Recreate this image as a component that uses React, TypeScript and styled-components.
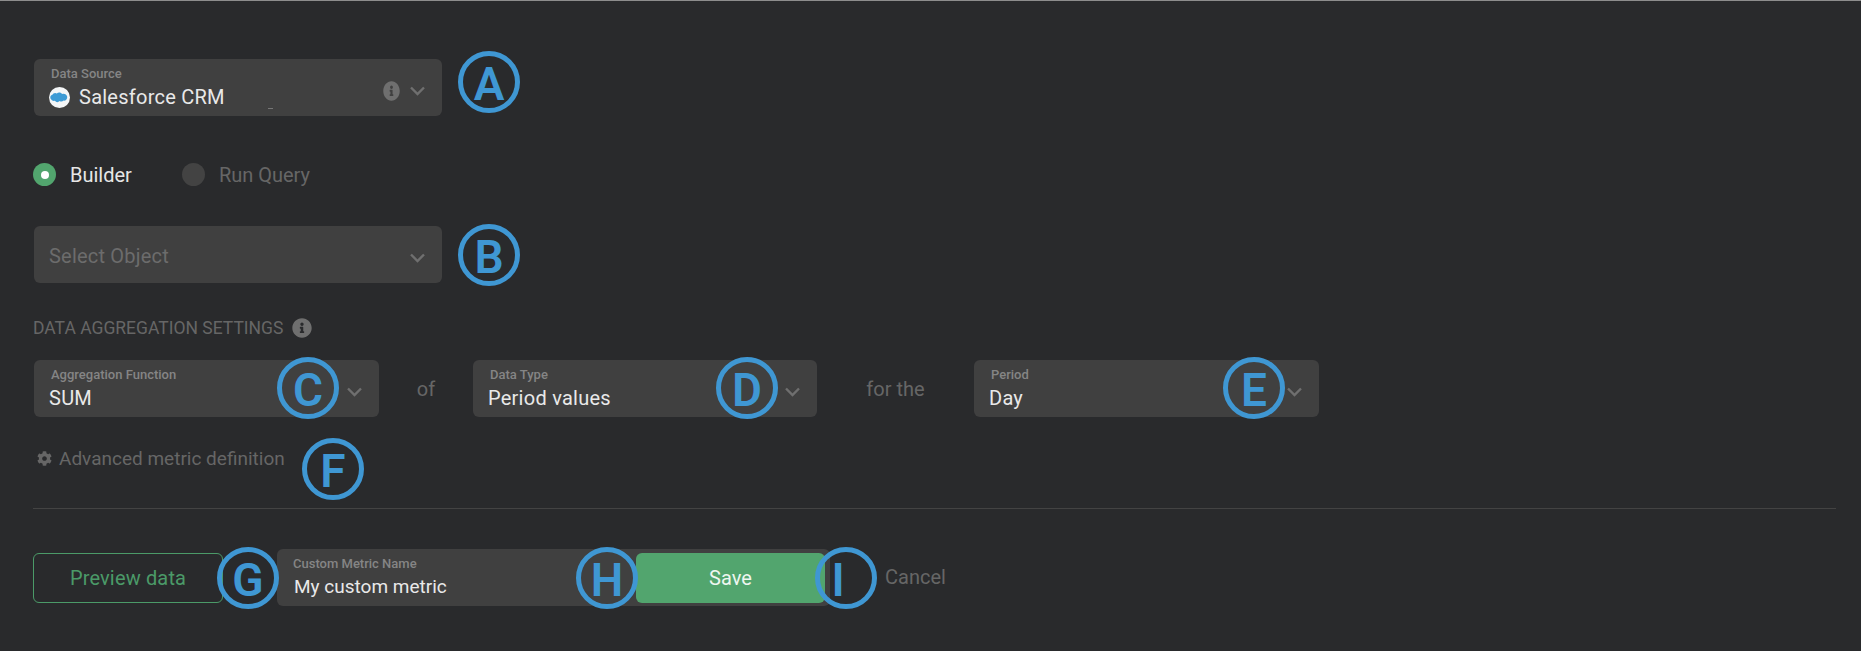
import React from 'react';
import styled, { createGlobalStyle } from 'styled-components';
import { FaInfoCircle, FaCog } from 'react-icons/fa';

const Global = createGlobalStyle`
  html, body { margin: 0; padding: 0; background: #fff; }
  body { font-family: Roboto, "Liberation Sans", sans-serif; }
`;

const Panel = styled.div`
  position: relative;
  box-sizing: border-box;
  width: 1861px;
  height: 651px;
  padding: 58px 25px 0 33px;
  background: #292a2c;
  border-top: 1px solid #8d8d8d;
  overflow: hidden;
`;

const Field = styled.div<{ $w: number }>`
  position: relative;
  box-sizing: border-box;
  width: ${(p) => p.$w}px;
  height: 57px;
  flex: none;
  background: #404040;
  border-radius: 6px;
  padding: 8px 16px 0 16px;
`;

const FieldLabel = styled.div`
  font-size: 13px;
  line-height: 14px;
  font-weight: 500;
  color: #858585;
  padding-left: 1px;
`;

const FieldValue = styled.div`
  display: flex;
  align-items: center;
  gap: 9px;
  margin-top: 4px;
  margin-left: -1px;
  font-size: 20px;
  line-height: 24px;
  letter-spacing: 0.25px;
  color: #e9e9e9;
`;

const Placeholder = styled.div`
  font-size: 20px;
  line-height: 45px;
  letter-spacing: 0.2px;
  color: #6c6c6c;
  margin-left: -1px;
`;

const FieldIcons = styled.div`
  position: absolute;
  right: 17px;
  top: 22px;
  height: 20px;
  display: flex;
  align-items: center;
  gap: 10px;
  color: #6f6f6f;
`;

const Tick = styled.span`
  position: absolute;
  left: 234px;
  bottom: 7px;
  width: 5px;
  height: 1px;
  background: #767676;
`;

const TopField = styled(Field)`
  margin-left: 1px;
`;

const RadioRow = styled.div`
  display: flex;
  align-items: center;
  height: 23px;
  margin-top: 47px;
`;

const RadioOption = styled.div<{ $on?: boolean }>`
  display: flex;
  align-items: center;
  gap: 14px;
  margin-right: 50px;
  font-size: 20px;
  color: ${(p) => (p.$on ? '#e6e6e6' : '#666666')};
`;

const RadioDot = styled.span<{ $on?: boolean }>`
  display: flex;
  align-items: center;
  justify-content: center;
  width: 23px;
  height: 23px;
  border-radius: 50%;
  background: ${(p) => (p.$on ? '#52a56e' : '#434343')};
  &::after {
    content: '';
    display: ${(p) => (p.$on ? 'block' : 'none')};
    width: 8px;
    height: 8px;
    border-radius: 50%;
    background: #fff;
  }
`;

const SelectObject = styled(Field)`
  margin-top: 40px;
  margin-left: 1px;
`;

const SectionHeading = styled.div`
  display: flex;
  align-items: center;
  gap: 9px;
  height: 20px;
  margin-top: 35px;
  font-size: 17.5px;
  color: #666666;
  text-transform: uppercase;
`;

const AggRow = styled.div`
  display: flex;
  align-items: center;
  margin-top: 22px;
  margin-left: 1px;
`;

const Joiner = styled.div<{ $w: number }>`
  width: ${(p) => p.$w}px;
  flex: none;
  text-align: center;
  font-size: 20px;
  color: #666666;
`;

const AdvancedRow = styled.div`
  display: flex;
  align-items: center;
  gap: 7px;
  height: 24px;
  margin-top: 29px;
  margin-left: 4px;
  font-size: 19px;
  color: #666666;
`;

const Divider = styled.hr`
  margin: 38px 0 0;
  border: 0;
  height: 1px;
  background: #434343;
`;

const Actions = styled.div`
  display: flex;
  align-items: center;
  margin-top: 40px;
`;

const PreviewButton = styled.button`
  box-sizing: border-box;
  width: 190px;
  height: 50px;
  flex: none;
  background: transparent;
  border: 1px solid #4b9a68;
  border-radius: 6px;
  font: inherit;
  font-size: 20px;
  letter-spacing: 0.15px;
  color: #4b9a68;
`;

const NameField = styled(Field)`
  display: flex;
  align-items: center;
  margin-left: 54px;
  padding: 0 5px 0 15px;
`;

const NameText = styled.div`
  flex: 1;
`;

const NameValue = styled(FieldValue)`
  margin-left: 2px;
  font-size: 19px;
  letter-spacing: 0;
`;

const SaveButton = styled.button`
  width: 189px;
  height: 50px;
  flex: none;
  background: #52a56e;
  border: 0;
  border-radius: 6px;
  font: inherit;
  font-size: 20px;
  color: #eef6f0;
`;

const CancelLink = styled.div`
  margin-left: 55px;
  margin-top: -1px;
  font-size: 20px;
  color: #666666;
`;

const Marker = styled.div<{ $x: number; $y: number; $shift: number }>`
  position: absolute;
  left: ${(p) => p.$x - 31}px;
  top: ${(p) => p.$y - 32}px;
  box-sizing: border-box;
  width: 62px;
  height: 62px;
  display: flex;
  align-items: center;
  justify-content: center;
  padding: 4px ${(p) => p.$shift}px 0 0;
  border: 5px solid #3f97d3;
  border-radius: 50%;
  font-family: Roboto, "Liberation Sans", sans-serif;
  font-size: 46px;
  font-weight: 600;
  line-height: 1;
  color: #3f97d3;
`;

const Chevron = () => (
  <svg width="15" height="10" viewBox="0 0 15 10" fill="none">
    <path d="M1 1.5 L7.5 8 L14 1.5" stroke="#6f6f6f" strokeWidth="2.4" />
  </svg>
);

const SalesforceLogo = () => (
  <svg width="21" height="21" viewBox="0 0 20 20" style={{ flex: 'none' }}>
    <circle cx="10" cy="10" r="10" fill="#f4f6f7" />
    <path
      transform="translate(-0.8 -1) scale(1.08 1.1)"
      d="M2.6 11.6c-1.3-1.3-.7-3.6 1.2-3.9.6-1.5 2.5-2.1 3.8-1.1 1.3-1.5 3.8-1.2 4.8.4 1.9-.6 4 .5 4.4 2.3.3 2-1.3 3.6-3.2 3.4-.9 1-2.5 1.1-3.5.4-1.1 1.3-3.2 1.2-4.1-.2-1.3.3-2.7 0-3.4-1.3z"
      fill="#3d9bd5"
    />
  </svg>
);

const InfoGlyph = styled(FaInfoCircle)`
  width: 17px;
  height: 20px;
  color: #6f6f6f;
`;

const HeadingInfo = styled(FaInfoCircle)`
  width: 20px;
  height: 20px;
  color: #6f6f6f;
`;

const Gear = styled(FaCog)`
  width: 15px;
  height: 15px;
  color: #666666;
`;

const Select = ({ w, label, value }: { w: number; label: string; value: string }) => (
  <Field $w={w}>
    <FieldLabel>{label}</FieldLabel>
    <FieldValue>{value}</FieldValue>
    <FieldIcons>
      <Chevron />
    </FieldIcons>
  </Field>
);

const markers: [string, number, number, number][] = [
  ['A', 489, 82, 0],
  ['B', 489, 255, 0],
  ['C', 308, 388, 0],
  ['D', 747, 388, 0],
  ['E', 1254, 388, 0],
  ['F', 333, 469, 0],
  ['G', 248, 578, 0],
  ['H', 607, 578, 0],
  ['I', 846, 578, 16],
];

export default function App() {
  return (
    <>
      <Global />
      <Panel>
        <TopField $w={408}>
          <FieldLabel>Data Source</FieldLabel>
          <FieldValue>
            <SalesforceLogo />
            Salesforce CRM
          </FieldValue>
          <FieldIcons>
            <InfoGlyph preserveAspectRatio="none" />
            <Chevron />
          </FieldIcons>
          <Tick />
        </TopField>

        <RadioRow>
          <RadioOption $on>
            <RadioDot $on />
            Builder
          </RadioOption>
          <RadioOption>
            <RadioDot />
            Run Query
          </RadioOption>
        </RadioRow>

        <SelectObject $w={408}>
          <Placeholder>Select Object</Placeholder>
          <FieldIcons>
            <Chevron />
          </FieldIcons>
        </SelectObject>

        <SectionHeading>
          Data Aggregation Settings
          <HeadingInfo />
        </SectionHeading>

        <AggRow>
          <Select w={345} label="Aggregation Function" value="SUM" />
          <Joiner $w={94}>of</Joiner>
          <Select w={344} label="Data Type" value="Period values" />
          <Joiner $w={157}>for the</Joiner>
          <Select w={345} label="Period" value="Day" />
        </AggRow>

        <AdvancedRow>
          <Gear />
          Advanced metric definition
        </AdvancedRow>

        <Divider />

        <Actions>
          <PreviewButton>Preview data</PreviewButton>
          <NameField $w={553}>
            <NameText>
              <FieldLabel>Custom Metric Name</FieldLabel>
              <NameValue>My custom metric</NameValue>
            </NameText>
            <SaveButton>Save</SaveButton>
          </NameField>
          <CancelLink>Cancel</CancelLink>
        </Actions>

        {markers.map(([l, x, y, s]) => (
          <Marker key={l} $x={x} $y={y} $shift={s}>
            {l}
          </Marker>
        ))}
      </Panel>
    </>
  );
}
